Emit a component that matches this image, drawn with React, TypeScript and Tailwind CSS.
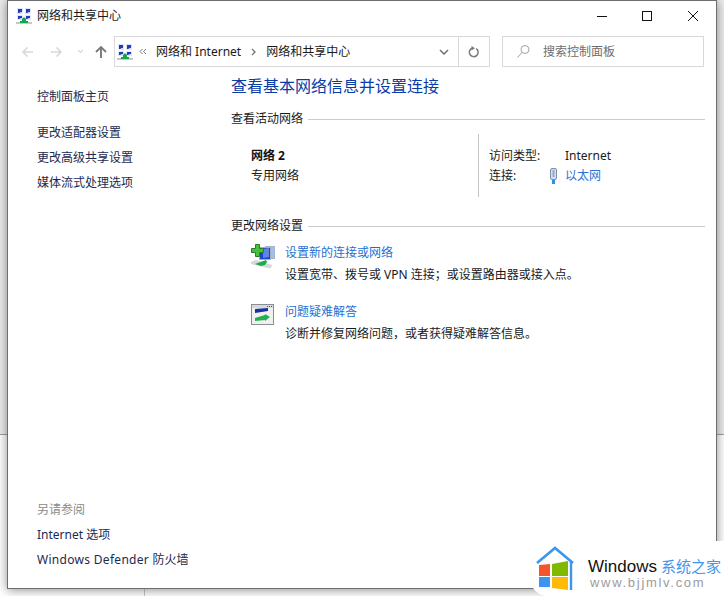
const font = { fontFamily: '"Noto Sans","Noto Sans CJK SC","Liberation Sans",sans-serif' };

function NetIcon() {
  return (
    <svg width="16" height="16" viewBox="0 0 16 16" className="block">
      <rect x="1" y="0" width="6" height="6" fill="#dfe6f4" />
      <rect x="9" y="0" width="6" height="6" fill="#dfe6f4" />
      <rect x="1" y="7" width="6" height="5" fill="#dfe6f4" />
      <rect x="9" y="7" width="6" height="5" fill="#dfe6f4" />
      <path d="M2 1h4v3H5L3 5H2z" fill="#2438c4" />
      <path d="M10 1h4v3h-1l-2 1h-1z" fill="#2438c4" />
      <path d="M2 8h4v2H5l-2 1H2z" fill="#2438c4" />
      <path d="M10 8h4v2h-1l-2 1h-1z" fill="#2438c4" />
      <path d="M8 9l2 2v2h2v2H4v-2h2v-2z" fill="#12a84a" />
      <rect x="0" y="14" width="16" height="2" fill="#c6cac6" />
      <rect x="4" y="14" width="8" height="1" fill="#12a84a" />
    </svg>
  );
}

function SetupIcon() {
  return (
    <svg width="26" height="26" viewBox="0 0 26 26" className="block">
      <rect x="15.5" y="3.5" width="9" height="12" fill="#9fc0ee" stroke="#a8b4c8" />
      <rect x="9.5" y="4.5" width="11" height="12" fill="#1f45c8" stroke="#a2b0c4" />
      <path d="M13 6l6-1v9l-6 1z" fill="#5f86e4" />
      <path d="M5.5 1.5h4v4h4v4h-4v4h-4v-4h-4v-4h4z" fill="#46c23a" stroke="#2a7d28" />
      <path d="M1 19l5-2 16 5-1 3h-3L1 21z" fill="#d5d9d5" />
      <path d="M5 21l11-4 1 2 -2 3-4 1z" fill="#1fa84f" />
    </svg>
  );
}

function TroubleIcon() {
  return (
    <svg width="24" height="22" viewBox="0 0 24 22" className="block">
      <rect x="0.5" y="0.5" width="22" height="20" fill="#eff1ef" stroke="#8a8e92" />
      <rect x="1" y="1" width="21" height="3" fill="#d6dade" />
      <path d="M4 5l13-1v3L4 9z" fill="#1a2fa0" />
      <path d="M4 14l10-3v-1l5 3-5 4v-1l-10 1z" fill="#22b04f" />
      <rect x="16" y="2" width="1" height="1" fill="#555" />
      <rect x="18" y="2" width="1" height="1" fill="#555" />
      <rect x="20" y="2" width="1" height="1" fill="#555" />
    </svg>
  );
}

function SectionHead({ label }: { label: string }) {
  return (
    <div className="flex items-center h-5">
      <span className="text-[12px] text-[#1a1a1a]">{label}</span>
      <div className="flex-1 h-px bg-[#cccccc] ml-[5px]" />
    </div>
  );
}

export default function App() {
  return (
    <div className="relative w-[724px] h-[596px] overflow-hidden bg-white text-[12px] text-[#1a1a1a]" style={font}>
      <div className="absolute left-0 top-0 w-[724px] h-[434px] bg-[#ececec]" />
      <div className="absolute left-0 top-[434px] w-[724px] h-px bg-[#a0a0a0]" />
      <div className="absolute left-[144px] top-[434px] w-px h-[162px] bg-[#c8c8c8]" />

      <div className="absolute left-[7px] top-0 w-[710px] h-[589px] bg-white border border-[#6e6e6e] shadow-[0_1px_10px_rgba(0,0,0,0.45)] flex flex-col">
        <div className="h-[30px] flex items-center shrink-0 pl-[8px]">
          <NetIcon />
          <span className="ml-[5px] text-[12px] leading-4">网络和共享中心</span>
          <div className="ml-auto mr-[18px] flex items-center">
            <svg width="10" height="10" viewBox="0 0 10 10" className="block"><path d="M0 5.5h10" stroke="#111" /></svg>
            <svg width="10" height="10" viewBox="0 0 10 10" className="block ml-[35px]"><rect x="0.5" y="0.5" width="9" height="9" fill="none" stroke="#111" /></svg>
            <svg width="10" height="10" viewBox="0 0 10 10" className="block ml-[36px]"><path d="M0 0l10 10M10 0L0 10" stroke="#111" /></svg>
          </div>
        </div>

        <div className="h-[31px] mt-[5px] flex items-center shrink-0">
          <div className="w-[106px] flex items-center pl-[13px]">
            <svg width="12" height="12" viewBox="0 0 12 12" className="block"><path d="M12 6H2M6.5 1.5L2 6l4.5 4.5" fill="none" stroke="#d8d8d8" strokeWidth="1.6" /></svg>
            <svg width="12" height="12" viewBox="0 0 12 12" className="block ml-[18px]"><path d="M0 6h10M5.5 1.5L10 6l-4.5 4.5" fill="none" stroke="#d8d8d8" strokeWidth="1.6" /></svg>
            <svg width="7" height="5" viewBox="0 0 7 5" className="block ml-[14px]"><path d="M1 1l2.5 2.5L6 1" fill="none" stroke="#d8d8d8" strokeWidth="1.2" /></svg>
            <svg width="12" height="13" viewBox="0 0 12 13" className="block ml-[11px]"><path d="M6 13V2M1 7l5-5 5 5" fill="none" stroke="#7a7a7a" strokeWidth="1.9" /></svg>
          </div>
          <div className="w-[376px] h-[31px] border border-[#d9d9d9] flex items-center">
            <div className="ml-[2px]"><NetIcon /></div>
            <svg width="8" height="7" viewBox="0 0 8 7" className="block ml-[6px]"><path d="M3.5 1L1 3.5 3.5 6M7 1L4.5 3.5 7 6" fill="none" stroke="#777" /></svg>
            <span className="ml-[9px] whitespace-nowrap">网络和 Internet</span>
            <svg width="5" height="8" viewBox="0 0 5 8" className="block ml-[10px]"><path d="M1 1l3 3-3 3" fill="none" stroke="#777" strokeWidth="1.4" /></svg>
            <span className="ml-[10px] whitespace-nowrap">网络和共享中心</span>
            <svg width="10" height="6" viewBox="0 0 10 6" className="block ml-auto mr-[9px]"><path d="M1 1l4 4 4-4" fill="none" stroke="#6f6f6f" strokeWidth="1.5" /></svg>
            <div className="w-[31px] h-full border-l border-[#d9d9d9] flex items-center justify-center">
              <svg width="12" height="12" viewBox="0 0 12 12" className="block"><path d="M8.2 2.6A4.4 4.4 0 1 1 4 2.2" fill="none" stroke="#7a7a7a" strokeWidth="1.5" /><path d="M3.5 0l3.5 2.2L3.5 4.4z" fill="#7a7a7a" /></svg>
            </div>
          </div>
          <div className="ml-[12px] w-[202px] h-[31px] border border-[#d9d9d9] flex items-center pl-[14px]">
            <svg width="13" height="13" viewBox="0 0 13 13" className="block"><circle cx="8" cy="4.5" r="4" fill="none" stroke="#a0a0a0" /><path d="M5 7.5L0.5 12.5" stroke="#a0a0a0" /></svg>
            <span className="ml-[13px] text-[#6d6d6d]">搜索控制面板</span>
          </div>
        </div>

        <div className="flex-1 flex min-h-0">
          <div className="w-[223px] shrink-0 flex flex-col pl-[29px] pt-[17px] pb-[16px] text-[#1c2a4e]">
            <div className="h-[25px] flex items-center">控制面板主页</div>
            <div className="h-[25px] mt-[11px] flex items-center">更改适配器设置</div>
            <div className="h-[25px] flex items-center">更改高级共享设置</div>
            <div className="h-[25px] flex items-center">媒体流式处理选项</div>
            <div className="mt-auto h-[25px] flex items-center text-[#8a8a8a]">另请参阅</div>
            <div className="h-[25px] flex items-center">Internet 选项</div>
            <div className="h-[25px] flex items-center whitespace-pre"><span className="tracking-[0.3px]">Windows Defender </span><span>防火墙</span></div>
          </div>

          <div className="flex-1 pr-[11px] pt-[7px]">
            <div className="text-[16px] leading-[24px] text-[#0a3ca6]">查看基本网络信息并设置连接</div>
            <div className="mt-[11px]"><SectionHead label="查看活动网络" /></div>
            <div className="flex h-[63px] mt-[5px]">
              <div className="w-[247px] pl-[20px] pt-[12px] leading-[20px]">
                <div className="font-bold text-[#111]">网络 2</div>
                <div>专用网络</div>
              </div>
              <div className="w-px bg-[#c4c4c4]" />
              <div className="pl-[10px] pt-[12px] leading-[20px]">
                <div className="flex"><span className="w-[76px]">访问类型:</span><span>Internet</span></div>
                <div className="flex items-center">
                  <span className="w-[60px]">连接:</span>
                  <svg width="9" height="16" viewBox="0 0 9 16" className="block mr-[7px]">
                    <rect x="1.5" y="0.5" width="6" height="11" rx="1.5" fill="#d5deee" stroke="#7d8ea8" />
                    <rect x="3.5" y="2" width="2" height="7" fill="#98aac8" />
                    <rect x="3" y="12" width="3" height="4" fill="#2f8fe0" />
                  </svg>
                  <span className="text-[#2f6fd8]">以太网</span>
                </div>
              </div>
            </div>
            <div className="mt-[19px]"><SectionHead label="更改网络设置" /></div>
            <div className="flex mt-[6px] pl-[19px]">
              <div className="w-[35px] shrink-0 pt-[1px]"><SetupIcon /></div>
              <div className="leading-[22px]">
                <div className="text-[#1f6fd0]">设置新的连接或网络</div>
                <div>设置宽带、拨号或 VPN 连接；或设置路由器或接入点。</div>
              </div>
            </div>
            <div className="flex mt-[15px] pl-[20px]">
              <div className="w-[34px] shrink-0 pt-[3px]"><TroubleIcon /></div>
              <div className="leading-[22px]">
                <div className="text-[#1f6fd0]">问题疑难解答</div>
                <div>诊断并修复网络问题，或者获得疑难解答信息。</div>
              </div>
            </div>
          </div>
        </div>
      </div>

      <div className="absolute left-[530px] top-[541px] w-[194px] h-[55px] bg-white rounded-bl-[18px]">
        <svg width="50" height="52" viewBox="0 0 50 52" className="absolute left-0 top-0">
          <path d="M7 22L25 7l18 15" fill="none" stroke="#3b96f2" strokeWidth="2.6" />
          <path d="M41 20v29" fill="none" stroke="#3b96f2" strokeWidth="2.4" />
          <path d="M9 24l11-1v12H9z" fill="#f2562a" />
          <path d="M22 23l16-3v15H22z" fill="#7fba00" />
          <path d="M9 36h11v10H9z" fill="#3b96f2" />
          <path d="M22 36h16v13l-16-2z" fill="#ffba08" />
        </svg>
        <div className="absolute left-[58px] top-[15px] flex items-baseline whitespace-nowrap">
          <span className="text-[17px] leading-5 text-[#111]" style={{ fontFamily: '"Liberation Sans",sans-serif' }}>Windows</span>
          <span className="ml-[4px] text-[15px] leading-5 text-[#3f96ee]">系统之家</span>
        </div>
        <div className="absolute left-[60px] top-[34px] text-[13px] leading-4 tracking-[1.7px] text-[#9c9c9c] whitespace-nowrap" style={{ fontFamily: '"Liberation Sans",sans-serif' }}>www.bjjmlv.com</div>
      </div>
    </div>
  );
}
